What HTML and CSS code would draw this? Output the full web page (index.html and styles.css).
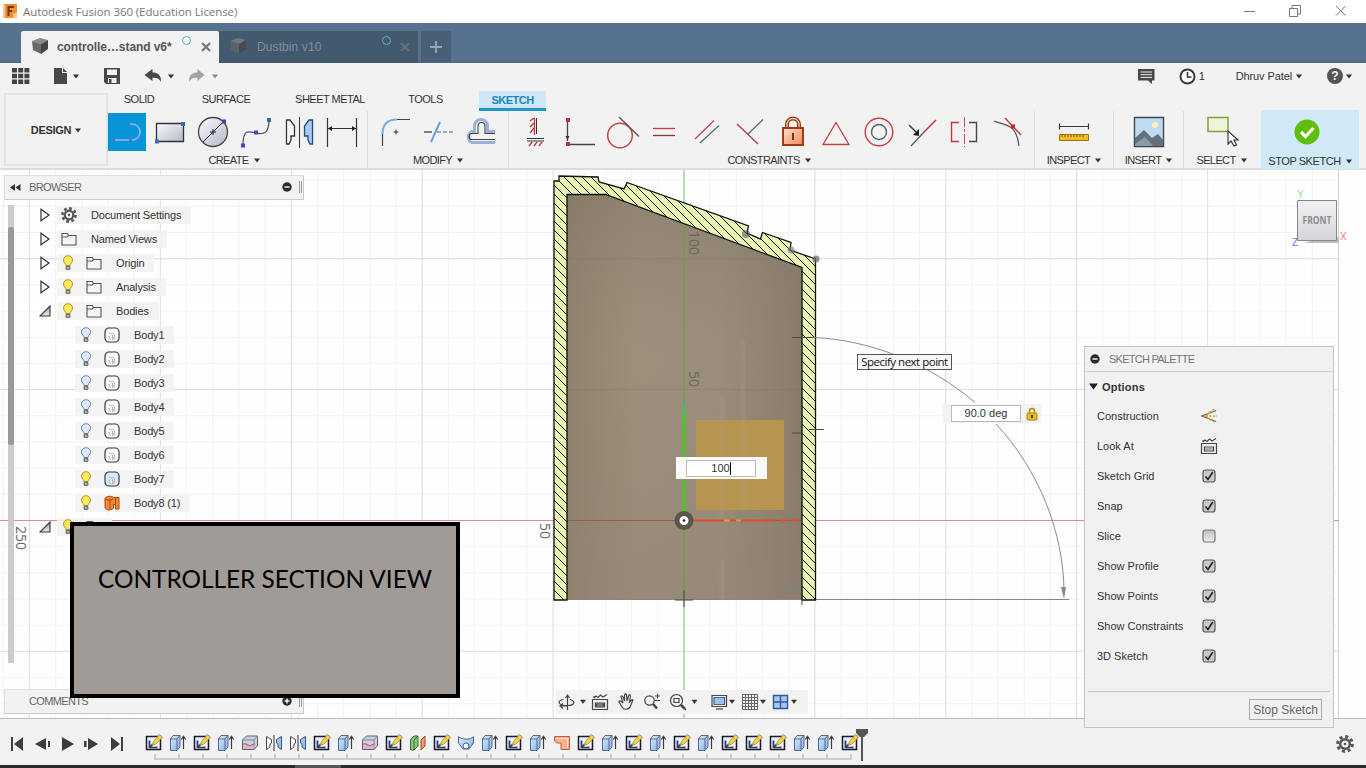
FILE: index.html
```html
<!DOCTYPE html>
<html lang="en">
<head>
<meta charset="utf-8">
<title>Autodesk Fusion 360 (Education License)</title>
<link rel="stylesheet" href="styles.css">
</head>
<body>
<svg class="defs" width="0" height="0">
  <defs>
    <linearGradient id="steel" x1="0" y1="0" x2="1" y2="1"><stop offset="0" stop-color="#fafbfd"/><stop offset="1" stop-color="#b4b9cb"/></linearGradient>
    <linearGradient id="blue" x1="0" y1="0" x2="1" y2="1"><stop offset="0" stop-color="#e4f2ff"/><stop offset="1" stop-color="#7ba9dc"/></linearGradient>
    <linearGradient id="lockfill" x1="0" y1="0" x2="1" y2="1"><stop offset="0" stop-color="#fbe3d3"/><stop offset="1" stop-color="#f08a58"/></linearGradient>
    <linearGradient id="grayfill" x1="0" y1="0" x2="0" y2="1"><stop offset="0" stop-color="#9a9a9a"/><stop offset="1" stop-color="#eee"/></linearGradient>
  </defs>
  <symbol id="caret" viewBox="0 0 6 5"><path d="M0 .5h6L3 4.500z"/></symbol>
  <symbol id="cube" viewBox="0 0 18 18"><path d="M1 4L9 1l8 2-7 4z" fill="#8a8a8a"/><path d="M1 4l9 3v10l-8-4z" fill="#696969"/><path d="M10 7l7-4v9l-7 5z" fill="#444"/></symbol>
  <symbol id="gear" viewBox="0 0 16 16"><circle cx="8" cy="8" r="6.600" fill="none" stroke="#555" stroke-width="2.600" stroke-dasharray="2.700 2.480"/><circle cx="8" cy="8" r="4.300" fill="none" stroke="#555" stroke-width="2.200"/><circle cx="8" cy="8" r="1.200" fill="#555"/></symbol>
  <symbol id="closed" viewBox="0 0 10 14"><path d="M1 1.200v11.600L9 7z" fill="#fff" stroke="#333" stroke-width="1.200"/></symbol>
  <symbol id="open" viewBox="0 0 12 12"><path d="M11 1v10H1z" fill="url(#grayfill)" stroke="#333" stroke-width="1.100"/></symbol>
  <symbol id="folder" viewBox="0 0 16 14"><path d="M1 13V1.500h5.500l1 2H15V13zM1 5h5l1.500-1.500" fill="#f6f6f6" stroke="#555" stroke-width="1.100"/></symbol>
  <symbol id="bulb" viewBox="0 0 12 16"><path d="M4 10.500C3.800 8.500 1.500 8 1.500 5a4.500 4.300 0 0 1 9 0c0 3-2.300 3.500-2.500 5.500z" stroke-width="1"/><path d="M4.200 11.300h3.600v3H4.200z" fill="#bbb" stroke="#555"/></symbol>
  <symbol id="solid" viewBox="0 0 16 16"><rect x="1" y="1" width="14" height="14" rx="4" stroke="#3a3a3a" stroke-width="1.200"/><path d="M5 6l3 1 2-1M5 8.500v3l2 1M8.500 8v4.500l2-1V7" fill="none" stroke="#aeb2b8"/></symbol>
  <symbol id="surf" viewBox="0 0 16 16"><path d="M1 3.500C2 .8 8 .8 9.500 2.500H15V14h-3.500V9.500H9.500V13C8 15.500 2 15.500 1 13z" fill="#f58638" stroke="#a8460c"/><path d="M1.500 4c2 1.500 5 1.500 7.500 0M11.500 3v6.500M6 5v9.500" fill="none" stroke="#a8460c"/></symbol>
  <symbol id="minus" viewBox="0 0 10 10"><circle cx="5" cy="5" r="4.700" fill="#2b2b2b"/><path d="M2.500 5h5" stroke="#fff" stroke-width="1.400"/></symbol>
  <symbol id="check" viewBox="0 0 14 14"><rect x="1" y="1" width="12" height="12" rx="2.500" fill="#c9c9c9" stroke="#555" stroke-width="1.200"/><path d="M3.500 7.500l2.500 3 4.800-7.500" fill="none" stroke="#222" stroke-width="1.600"/></symbol>
  <symbol id="uncheck" viewBox="0 0 14 14"><rect x="1" y="1" width="12" height="12" rx="2.500" fill="url(#grayfill)" fill-opacity=".6" stroke="#777" stroke-width="1.200"/></symbol>
  <symbol id="lookat" viewBox="0 0 18 18"><path d="M1.500 6.500h15v10h-15zM4.500 10h9v4h-9z" fill="#eee" stroke="#444" stroke-width="1.200"/><path d="M5.500 11h7v2h-7z" fill="#aaa"/><path d="M3 5l2-2 2 1.500L9.500 2l2.500 2 4-2.500M3 5V3" fill="none" stroke="#444" stroke-width="1.100"/></symbol>
  <symbol id="t-sketch" viewBox="0 0 18 18"><path d="M1.500 2.500h14v13h-14z" fill="#e9eef8" stroke="#1b1b2b" stroke-width="1.500"/><path d="M4.500 6.500v7h8M5 13l3-3" fill="none" stroke="#263a5e" stroke-width="1.700"/><path d="M7.500 11l1-3.500L14.500 .5l3 2.500-6.500 7z" fill="#f0cf42" stroke="#a98c39" stroke-width=".8"/></symbol>
  <symbol id="t-extrude" viewBox="0 0 18 18"><path d="M1.500 5L4 1.500h7V13l-3 3.500H1.500z" fill="url(#blue)" stroke="#516c93"/><path d="M1.500 5H8l3-3.500M8 5v11" fill="none" stroke="#516c93"/><path d="M14.500 15V3m-2.200 2.500l2.200-3.200 2.200 3.200" fill="none" stroke="#3a3a3a" stroke-width="1.200"/></symbol>
  <symbol id="t-split" viewBox="0 0 18 18"><path d="M1.500 6l4-4h11v9.500l-3.500 4H1.500z" fill="#cbd0dc" stroke="#5d6577"/><path d="M1.500 6H13l3.500-4M13 6v9" fill="none" stroke="#828a9c"/><path d="M2 10.500c3-4 6 4 11 0l3-2.500v3.500l-3.500 3.500H2z" fill="#dca9c0" fill-opacity=".6"/><path d="M1.500 11c3-4 6 3 9 0l2.500-1" fill="none" stroke="#b3466f"/></symbol>
  <symbol id="t-mirror" viewBox="0 0 18 18"><path d="M1.500 2.500l5 3V9L5 10v3l-3.500 2.500z" fill="#fff" stroke="#444"/><path d="M16.500 2.500l-5 3V9l1.500 1v3l3.500 2.500z" fill="#9bc3ee" stroke="#35577f"/><path d="M9 1v16" stroke="#333"/></symbol>
  <symbol id="t-offset" viewBox="0 0 18 18"><path d="M1.500 6L5 2h4v10l-4 4H1.500z" fill="#8cc07f" stroke="#35752d"/><path d="M5 6L9 2M5 6v10" fill="none" stroke="#35752d"/><path d="M12 6l4-4v10l-4 4z" fill="#ec9965" stroke="#a84c20"/></symbol>
  <symbol id="t-loft" viewBox="0 0 18 18"><path d="M1.500 2.500C4 6 14 6 16.500 2.500V9L12 15H6L1.500 9z" fill="url(#blue)" stroke="#4b6791"/><circle cx="9" cy="12" r="3" fill="#f4f7fb" stroke="#4b6791"/></symbol>
  <symbol id="t-comb" viewBox="0 0 18 18"><path d="M1.500 2.500h15v13H8V9H4L1.500 7z" fill="#f5b394" stroke="#c05c37"/><path d="M4 4.500h10.500v9" fill="none" stroke="#fadccd"/></symbol>
  <symbol id="lock" viewBox="0 0 12 14"><path d="M3.500 6V4a2.500 2.500 0 0 1 5 0v2" fill="none" stroke="#b38810" stroke-width="1.600"/><rect x="1" y="6" width="10" height="7" rx="1" fill="#edbc23" stroke="#af8209"/><path d="M6 8v3" stroke="#4b3300" stroke-width="2"/></symbol>
</svg>

<div class="app">
  <header class="titlebar">
    <svg class="app-logo" width="14" height="14" viewBox="0 0 14 14"><path d="M0 0h14v14H0z" fill="#f9c796"/><path d="M2 0h12v8l-4 2v4H2z" fill="#f58b2c"/><path d="M5 3h6M5 7h4M5.500 2v10" fill="none" stroke="#70380f" stroke-width="2"/></svg>
    <span class="title-text">Autodesk Fusion 360 (Education License)</span>
    <svg class="win-controls" width="106" height="14" viewBox="0 0 106 14" fill="none" stroke="#777"><path d="M1 7.500h11M46.500 4.500h8v8h-8zM49 4V1.500h8.500v8.500H55M93 2l9.500 9.500M102.500 2L93 11.500"/></svg>
  </header>

  <nav class="doc-tabs">
    <div class="doc-tab active"><svg width="18" height="18"><use href="#cube"/></svg><span class="doc-name">controlle…stand v6*</span><i class="sync"></i><svg class="x" width="10" height="10" viewBox="0 0 10 10"><path d="M1 1l8 8M9 1L1 9" stroke="#777" stroke-width="2.200"/></svg></div>
    <div class="doc-tab"><svg width="18" height="18" opacity=".65"><use href="#cube"/></svg><span class="doc-name">Dustbin v10</span><i class="sync"></i><svg class="x" width="10" height="10" viewBox="0 0 10 10"><path d="M1 1l8 8M9 1L1 9" stroke="#60707f" stroke-width="2"/></svg></div>
    <div class="new-tab"><svg width="12" height="12" viewBox="0 0 12 12"><path d="M6 0v12M0 6h12" stroke="#9ba8b4" stroke-width="1.800"/></svg></div>
  </nav>

  <div class="quickbar">
    <svg width="212" height="20" viewBox="0 0 212 20">
      <path d="M2 2h5v4.500H2zM8.200 2h5v4.500h-5zM14.400 2h5v4.500h-5zM2 7.800h5v4.500H2zM8.200 7.800h5v4.500h-5zM14.400 7.800h5v4.500h-5zM2 13.600h5V18H2zM8.200 13.600h5V18h-5zM14.400 13.600h5V18h-5z" fill="#444"/>
      <path d="M44 2h8v5h5v11H44zM53 2l4 4h-4z" fill="#484848"/><path d="M63 8.500h6l-3 4z" fill="#333"/>
      <path d="M94 2h16v16H96l-2-2z" fill="#484848"/><path d="M97 3.500h10V9h-10zM98 12h8.500v5H98z" fill="#f2f2f2"/><path d="M99 13h2.500v4H99z" fill="#484848"/>
      <path d="M134.500 9l8-6v3.600c5 0 9 2.500 8.500 9.400-1.500-3.500-4-4.300-8.500-4.300V15z" fill="#484848"/><path d="M158 8.500h6l-3 4z" fill="#333"/>
      <path d="M194.500 9l-7-6v3.600c-5 0-9 2.500-8.500 9.400 1.500-3.500 4-4.300 8.500-4.300V15z" fill="#a3a3a3"/><path d="M202 8.500h6l-3 4z" fill="#888"/>
    </svg>
    <div class="account">
      <svg width="17" height="16" viewBox="0 0 17 16"><path d="M0 1h16.500v11.500H14V16l-4-3.500H0z" fill="#484848"/><path d="M2.500 4h11.500M2.500 6.700h11.500M2.500 9.400h11.500" stroke="#eee" stroke-width="1"/></svg>
      <svg class="clock" width="17" height="17" viewBox="0 0 17 17"><circle cx="8.500" cy="8.500" r="7" fill="#fff" stroke="#3c3c3c" stroke-width="2"/><path d="M8.500 4v5h4" fill="none" stroke="#333" stroke-width="1.500"/></svg>
      <span class="count">1</span>
      <span class="user">Dhruv Patel</span><svg class="car" width="6" height="5"><use href="#caret"/></svg>
      <span class="help">?</span><svg class="car" width="6" height="5"><use href="#caret"/></svg>
    </div>
  </div>

  <div class="ribbon">
    <button class="workspace">DESIGN<svg class="car" width="6" height="5"><use href="#caret"/></svg></button>
    <div class="ribbon-main">
      <div class="ribbon-tabs"><span class="rt solid">SOLID</span><span class="rt surface">SURFACE</span><span class="rt sheet">SHEET METAL</span><span class="rt tools">TOOLS</span><span class="rt sketch">SKETCH</span></div>
      <div class="groups">
        <section class="group create"><div class="icons">
          <svg viewBox="0 0 38 38"><path d="M0 0h38v38H0z" fill="#0696d7"/><path d="M5 27h19a8 8 0 0 0 0-16h-4" fill="none" stroke="#9bb7f0" stroke-width="1.500"/><path d="M4 25.500h3v3H4zM21 25.500h3v3h-3zM19 9.500h3v3h-3z" fill="#4773c9"/></svg>
          <svg viewBox="0 0 38 38"><path d="M5.500 10.500h27v18h-27z" fill="url(#steel)" stroke="#333" stroke-width="1.300"/><path d="M30 9h4v4h-4zM4 26.500h4v4H4z" fill="#366fb0"/></svg>
          <svg viewBox="0 0 38 38"><circle cx="19" cy="19" r="14.500" fill="url(#steel)" stroke="#444" stroke-width="1.300"/><path d="M9 29L29.500 8.500M19 16v6M16 19h6" stroke="#222"/><path d="M28 6.500h4v4h-4z" fill="#4740ad"/></svg>
          <svg viewBox="0 0 38 38"><path d="M6 32C6 16 11 18 19 20s13 0 13-13" fill="none" stroke="#49557a" stroke-width="1.300"/><path d="M4 30.500h4v4H4zM17 17.500h4v4h-4z" fill="#4b42bd"/><path d="M30 5h4v4h-4z" fill="#2a6f94"/></svg>
          <svg viewBox="0 0 38 38"><path d="M6.500 7h3.500l4.500 6v10h-3.500v4L9 31H6.500z" fill="#fbfbfb" stroke="#333" stroke-width="1.300"/><path d="M32.500 7H29l-4.500 6v10H28v4l2 4h2.500z" fill="#a9cbf2" stroke="#244d7f" stroke-width="1.300"/><path d="M19.500 4v31" stroke="#333"/></svg>
          <svg viewBox="0 0 38 38"><path d="M4.500 5v29M33.500 5v29M5 15.500h28" stroke="#333" stroke-width="1.200"/><path d="M5 15.500l4-2.500v5zM33 15.500l-4-2.500v5z" fill="#222"/></svg>
        </div><div class="label">CREATE<svg class="car" width="6" height="5"><use href="#caret"/></svg></div></section>
        <section class="group modify"><div class="icons">
          <svg viewBox="0 0 38 38"><path d="M19 6.500h15M6.500 19v14" stroke="#444" stroke-width="1.200"/><path d="M6.500 21C6.500 11 12 6.500 21 6.500" fill="none" stroke="#7eabe1" stroke-width="2"/><path d="M20 16.500v5M17.500 19h5" stroke="#333"/></svg>
          <svg viewBox="0 0 38 38"><path d="M5 19h8" stroke="#333" stroke-width="1.200"/><path d="M18 19h16" stroke="#8294bd" stroke-width="1.300" stroke-dasharray="4 2"/><path d="M12 29l9-20" stroke="#6a9de0" stroke-width="2"/></svg>
          <svg viewBox="0 0 38 38"><path d="M33 18.500h-7.500V13a6.500 6.500 0 0 0-13 0v5.500H10a6 6 0 0 0 0 11h23" fill="none" stroke="#9db0da" stroke-width="3"/><path d="M33 20.500h-10V13a3.500 3.500 0 0 0-7 0v7.500h-6c-4 0-4 6 0 6h23" fill="none" stroke="#444" stroke-width="1.100"/></svg>
        </div><div class="label">MODIFY<svg class="car" width="6" height="5"><use href="#caret"/></svg></div></section>
        <section class="group constraints"><div class="icons">
          <svg viewBox="0 0 38 38"><path d="M19.500 5v16M10 25.500h17M10 28h17" stroke="#343434"/><path d="M17.500 5v17M17 5l-4 3M17 10l-4 4M17 15l-4 5M15 29l-3 4M20 29l-3 4M25 29l-3 4" fill="none" stroke="#bd3838" stroke-width="1.300"/></svg>
          <svg viewBox="0 0 38 38"><path d="M7.500 8v20M9 31.500h26" stroke="#444" stroke-width="1.300"/><path d="M6 5h4v4H6zM6 29h4v4H6z" fill="#bd2f40"/><path d="M5.500 23l2 4 2-4" fill="#333"/></svg>
          <svg viewBox="0 0 38 38"><circle cx="17" cy="22.500" r="12.300" fill="none" stroke="#c6444b" stroke-width="1.500"/><path d="M16 4l20 19.500" stroke="#555" stroke-width="1.300"/></svg>
          <svg viewBox="0 0 38 38"><path d="M8 15.500h22" stroke="#c83940" stroke-width="1.300"/><path d="M8 22.500h22" stroke="#7b3642" stroke-width="1.300"/></svg>
          <svg viewBox="0 0 38 38"><path d="M7 26L26 7.500" stroke="#c94149" stroke-width="1.300"/><path d="M12 30L31 12.500" stroke="#576e70" stroke-width="1.300"/></svg>
          <svg viewBox="0 0 38 38"><path d="M6 11l21 20" stroke="#b93740" stroke-width="1.300"/><path d="M17 21L32 6.500" stroke="#59706b" stroke-width="1.300"/></svg>
          <svg viewBox="0 0 38 38"><path d="M13 16v-5a6 5.500 0 0 1 12 0v5" fill="none" stroke="#9e3613" stroke-width="4"/><path d="M13 16v-5a6 5.500 0 0 1 12 0v5" fill="none" stroke="#f5d4bf" stroke-width="1.300"/><rect x="9" y="15" width="20" height="17" fill="url(#lockfill)" stroke="#a33a11" stroke-width="2"/><path d="M19 20v7" stroke="#8d300d" stroke-width="2"/></svg>
          <svg viewBox="0 0 38 38"><path d="M19 9.500l13 22H6z" fill="none" stroke="#c13e46" stroke-width="1.300"/></svg>
          <svg viewBox="0 0 38 38"><circle cx="19" cy="19" r="13.800" fill="none" stroke="#c93e49" stroke-width="1.400"/><circle cx="19" cy="19" r="7.500" fill="none" stroke="#4d6869" stroke-width="1.400"/></svg>
          <svg viewBox="0 0 38 38"><path d="M9 33l14-15" stroke="#555" stroke-width="1.300"/><path d="M23 18L34 7" stroke="#c4303b" stroke-width="1.500"/><path d="M7 12l8 8" stroke="#333" stroke-width="1.500"/><path d="M17 23v-7l-6 6z" fill="#222"/></svg>
          <svg viewBox="0 0 38 38"><path d="M14 9.500H6.500v19H14" fill="none" stroke="#c33641" stroke-width="1.400"/><path d="M24 9.500h7.500v19H24" fill="none" stroke="#4c4446" stroke-width="1.400"/><path d="M19.500 4v30" stroke="#c24c50" stroke-dasharray="10 2 3 2"/></svg>
          <svg viewBox="0 0 38 38"><path d="M6 8c12 5 22 2 25 25" fill="none" stroke="#555" stroke-width="1.200"/><path d="M17 5l16 17" stroke="#c33c45" stroke-width="1.500"/><path d="M23 11.500h4v4h-4z" fill="#c92535"/></svg>
        </div><div class="label">CONSTRAINTS<svg class="car" width="6" height="5"><use href="#caret"/></svg></div></section>
        <section class="group inspect"><div class="icons"><svg viewBox="0 0 38 38"><path d="M4.500 10.500v6M33.500 10.500v6M5 13.500h28" stroke="#383838" stroke-width="1.200"/><path d="M4.500 21.500h29v6h-29z" fill="#f0bd2c" stroke="#a87008"/><path d="M7 22v2m3-2v2m3-2v2m3-2v2m3-2v2m3-2v2m3-2v2m3-2v2" stroke="#85590a"/></svg></div><div class="label">INSPECT<svg class="car" width="6" height="5"><use href="#caret"/></svg></div></section>
        <section class="group insert"><div class="icons"><svg viewBox="0 0 38 38"><path d="M4.500 4.500h29v29h-29z" fill="#bddcf2" stroke="#3c4650" stroke-width="1.400"/><circle cx="25" cy="12" r="3" fill="#fff1b0"/><path d="M5 25l9-8 8 8 6-4 5 6v6H5z" fill="#64717d"/><path d="M5 31l10-7 8 9H5z" fill="#8b9aa4"/></svg></div><div class="label">INSERT<svg class="car" width="6" height="5"><use href="#caret"/></svg></div></section>
        <section class="group select"><div class="icons"><svg viewBox="0 0 38 38"><path d="M4 4.500h20v14H4z" fill="#eef4d8" stroke="#82a13d" stroke-width="1.500"/><path d="M24 18v13l3-3 3 5 2.500-1-2.500-5h4z" fill="#fff" stroke="#30394b" stroke-width="1.200"/></svg></div><div class="label">SELECT<svg class="car" width="6" height="5"><use href="#caret"/></svg></div></section>
        <section class="group stop"><div class="icons"><svg viewBox="0 0 38 38"><circle cx="16" cy="19" r="12.500" fill="#5fbe0c"/><path d="M10 19l4.500 4.500L22.500 15" fill="none" stroke="#fff" stroke-width="3.200"/></svg></div><div class="label">STOP SKETCH<svg class="car" width="6" height="5"><use href="#caret"/></svg></div></section>
      </div>
    </div>
  </div>

  <main class="canvas">
    <svg class="drawing" width="1366" height="548" viewBox="0 170 1366 548">
      <defs>
        <pattern id="minor" width="26.180" height="26.180" patternUnits="userSpaceOnUse" x="29" y="520"><path d="M.5 0v26.200M0 .5h26.200" stroke="#f2f2f2"/></pattern>
        <pattern id="major" width="130.900" height="130.900" patternUnits="userSpaceOnUse" x="29" y="520"><path d="M.5 0v131M0 .5h131" stroke="#e0e0e0"/></pattern>
        <pattern id="hatch" width="9" height="9" patternUnits="userSpaceOnUse"><path d="M-1-1l11 11M-1 8l2 2M8-1l2 2" stroke="#14170a" stroke-width="1"/></pattern>
        <linearGradient id="wood"><stop offset="0" stop-color="#8f826f"/><stop offset=".3" stop-color="#9c8f7c"/><stop offset=".65" stop-color="#9a8d7b"/><stop offset="1" stop-color="#8a7c6c"/></linearGradient>
        <linearGradient id="shade" x1="0" y1="0" x2="0" y2="1"><stop offset="0" stop-color="#7d705e" stop-opacity=".4"/><stop offset=".4" stop-color="#8c7f6d" stop-opacity="0"/><stop offset="1" stop-color="#8c7f6d" stop-opacity=".3"/></linearGradient>
        <linearGradient id="cubeface" x1="0" y1="0" x2="0" y2="1"><stop offset="0" stop-color="#f2f2f3"/><stop offset="1" stop-color="#d5d5d9"/></linearGradient>
      </defs>
      <path d="M0 170h1366v548H0z" fill="#fefefe"/>
      <path d="M0 170h1339v548H0z" fill="url(#minor)"/><path d="M0 170h1339v548H0z" fill="url(#major)"/>
      <path d="M1338.500 170v548" stroke="#d2d2d2"/>
      <path d="M0 520.500h1339" stroke="#d08f9a"/><path d="M684 170v548" stroke="#9cdb9c" stroke-width="1.400"/>
      <path d="M567 600V195h39l196 72v333z" fill="url(#wood)"/><path d="M567 600V195h39l196 72v333z" fill="url(#shade)"/>
      <path d="M567 389.500h235M567 258.700h213" stroke="#7e725f" stroke-opacity=".3"/>
      <path d="M684 224v376" stroke="#729a54" stroke-width="1.500"/>
      <path d="M567 520.500h235" stroke="#a4554f"/><path d="M567 599.500h235M816 599.500h253" stroke="#8a8580"/>
      <path d="M696 420h88v90h-88z" fill="#b7944f"/>
      <path d="M722 395v125M743 340v170M722 560v40" stroke="#b3a48c" stroke-opacity=".2" stroke-width="5"/>
      <path d="M554 600V181H559V176L598 177L599 182L624 189L627 182.500L748.500 226L747 233L760.500 239L762.500 232.500L791 242.500L790 250L815.500 259V600H802V267.500L605.500 194.500H567V600z" fill="#e9f4b2"/>
      <path d="M554 600V181H559V176L598 177L599 182L624 189L627 182.500L748.500 226L747 233L760.500 239L762.500 232.500L791 242.500L790 250L815.500 259V600H802V267.500L605.500 194.500H567V600z" fill="url(#hatch)" stroke="#111" stroke-width="1.300"/>
      <path d="M684 408v112" stroke="#59bd36" stroke-width="3.500"/><path d="M684 403v15" stroke="#45b96e" stroke-width="2"/>
      <path d="M692 520.500h33m5 0h5m5 0h35m4 0h8m4 0h7" stroke="#e74b26" stroke-width="2"/><path d="M724 520.500h6m6 0h5" stroke="#e8963b" stroke-width="2"/>
      <circle cx="684" cy="520.500" r="7" fill="#fff" stroke="#5c5849" stroke-width="5"/><circle cx="684" cy="520.500" r="1.300" fill="#222"/>
      <path d="M684 590v17M675 600h18M802 590v15M792 337.500h21M792 433h10M809 429.500h15" stroke="#4d4a42" fill="none"/>
      <circle cx="746" cy="234" r="4" fill="#555" fill-opacity=".6"/><circle cx="816" cy="259" r="3.500" fill="#666" fill-opacity=".7"/><circle cx="791" cy="250" r="3.500" fill="#777" fill-opacity=".6"/>
      <path d="M785 588l14-3v8" fill="none" stroke="#5c8d9c" stroke-opacity=".7"/>
      <path d="M813 337.500c54 2 114 24 162 65M996 424c43 46 68 109 68 169" fill="none" stroke="#8c8c8c"/><path d="M1061 587h5l-2 12z" fill="#888"/>
      <g class="rulers"><text transform="translate(688.500 231) rotate(90)" textLength="24" lengthAdjust="spacingAndGlyphs">100</text><text transform="translate(688.500 371) rotate(90)">50</text><text transform="translate(539.500 523) rotate(90)">50</text><text transform="translate(16 526) rotate(90)">250</text></g>
      <path d="M1303 243h36v-4l-3-4z" fill="#bbb"/>
      <path d="M1297.500 200.500h39v40h-39z" fill="url(#cubeface)" stroke="#87878b"/>
      <text class="cube-text" x="1317" y="224" text-anchor="middle" textLength="29" lengthAdjust="spacingAndGlyphs">FRONT</text>
      <g class="axes"><text x="1297" y="198" fill="#8ee38e">Y</text><text x="1292" y="246" fill="#7373ea">Z</text><text x="1340" y="240" fill="#f07a8e">X</text></g>
    </svg>

    <div class="scroll"><i></i></div>
    <aside class="browser">
      <header class="panel-head"><svg width="11" height="7" viewBox="0 0 11 7"><path d="M5 0v7L0 3.500zM10.500 0v7l-5-3.500z" fill="#333"/></svg><span>BROWSER</span><svg class="end" width="10" height="10"><use href="#minus"/></svg><i class="grip"></i></header>
      <ul class="tree">
        <li><svg class="arrow" width="10" height="14"><use href="#closed"/></svg><div class="node top"><svg width="16" height="16"><use href="#gear"/></svg><span>Document Settings</span></div></li>
        <li><svg class="arrow" width="10" height="14"><use href="#closed"/></svg><div class="node top"><svg width="16" height="14"><use href="#folder"/></svg><span>Named Views</span></div></li>
        <li><svg class="arrow" width="10" height="14"><use href="#closed"/></svg><div class="node"><svg class="bulb on" width="12" height="16"><use href="#bulb"/></svg><svg width="16" height="14"><use href="#folder"/></svg><span>Origin</span></div></li>
        <li><svg class="arrow" width="10" height="14"><use href="#closed"/></svg><div class="node"><svg class="bulb on" width="12" height="16"><use href="#bulb"/></svg><svg width="16" height="14"><use href="#folder"/></svg><span>Analysis</span></div></li>
        <li><svg class="arrow" width="12" height="12"><use href="#open"/></svg><div class="node"><svg class="bulb on" width="12" height="16"><use href="#bulb"/></svg><svg width="16" height="14"><use href="#folder"/></svg><span>Bodies</span></div></li>
        <li class="body"><div class="node"><svg class="bulb off" width="12" height="16"><use href="#bulb"/></svg><svg class="solid-icon" width="16" height="16"><use href="#solid"/></svg><span>Body1</span></div></li>
        <li class="body"><div class="node"><svg class="bulb off" width="12" height="16"><use href="#bulb"/></svg><svg class="solid-icon" width="16" height="16"><use href="#solid"/></svg><span>Body2</span></div></li>
        <li class="body"><div class="node"><svg class="bulb off" width="12" height="16"><use href="#bulb"/></svg><svg class="solid-icon" width="16" height="16"><use href="#solid"/></svg><span>Body3</span></div></li>
        <li class="body"><div class="node"><svg class="bulb off" width="12" height="16"><use href="#bulb"/></svg><svg class="solid-icon" width="16" height="16"><use href="#solid"/></svg><span>Body4</span></div></li>
        <li class="body"><div class="node"><svg class="bulb off" width="12" height="16"><use href="#bulb"/></svg><svg class="solid-icon" width="16" height="16"><use href="#solid"/></svg><span>Body5</span></div></li>
        <li class="body"><div class="node"><svg class="bulb off" width="12" height="16"><use href="#bulb"/></svg><svg class="solid-icon" width="16" height="16"><use href="#solid"/></svg><span>Body6</span></div></li>
        <li class="body"><div class="node"><svg class="bulb on" width="12" height="16"><use href="#bulb"/></svg><svg class="solid-icon shown" width="16" height="16"><use href="#solid"/></svg><span>Body7</span></div></li>
        <li class="body"><div class="node"><svg class="bulb on" width="12" height="16"><use href="#bulb"/></svg><svg width="16" height="16"><use href="#surf"/></svg><span>Body8 (1)</span></div></li>
        <li><svg class="arrow" width="12" height="12"><use href="#open"/></svg><div class="node"><svg class="bulb on" width="12" height="16"><use href="#bulb"/></svg><svg width="16" height="14"><use href="#folder"/></svg></div></li>
      </ul>
    </aside>
    <div class="panel-head comments"><span>COMMENTS</span><svg class="end" width="10" height="10" viewBox="0 0 10 10"><use href="#minus"/><path d="M5 2.500v5" stroke="#fff" stroke-width="1.400"/></svg><i class="grip"></i></div>
    <div class="callout">CONTROLLER SECTION VIEW</div>

    <div class="tooltip">Specify next point</div>
    <div class="dim angle"><span>90.0 deg</span><svg width="12" height="14"><use href="#lock"/></svg></div>
    <div class="dim length"><span>100<i class="cursor"></i></span></div>

    <div class="navbar">
      <svg width="252" height="24" viewBox="556 690 252 24" fill="none" stroke="#444" stroke-width="1.200">
        <path d="M567.500 695v15m-2-12l2-3 2 3M570 699.500c6 1.500 5 6-2.500 6-10 0-11-5-4-6M561 706h7m-5-2.500l-3 2.500 3 2.500"/>
        <path d="M692 700h5l-2.500 3.500zM580.500 700h5l-2.500 3.500zM729.500 700h5l-2.500 3.500zM760.500 700h5l-2.500 3.500zM791.500 700h5l-2.500 3.500z" fill="#333" stroke="#333" stroke-width=".5"/>
        <use href="#lookat" x="591" y="693" width="18" height="18"/>
        <path d="M622 707l-3-5c0-2 2-1 4 1l-2-6c0-2 2-1 2.500 1l1 3v-6c0-1.500 2-1.500 2 0l.5 6 1.500-5c.5-2 2-1 2 0l-1 6 2-2c1-1 2 0 1 1l-2 5c-1 3-6 5-8.500 1z"/>
        <circle cx="649.500" cy="700.500" r="4.700"/><path d="M653 704l4 4.500" stroke-width="2.500"/><path d="M657.500 693.500v5M655 696h5M655 700.500h5" stroke-width="1"/>
        <circle cx="676.500" cy="700.500" r="6"/><path d="M674 698.500h5v4h-5zM681 705l5 5"/><path d="M681 705l4 4" stroke-width="2.500"/>
        <path d="M712 695.500h14.500v11H712z"/><path d="M714 697.500h10.500v7H714z" fill="#9ec3ee" stroke="#426798"/><path d="M716 709h7"/>
        <path d="M742.500 694.500h15v15h-15zM745.500 694.500v15m3-15v15m3-15v15m3-15v15m-12-12h15m-15 3h15m-15 3h15m-15 3h15" stroke="#666" stroke-width="1"/>
        <path d="M773.500 695.500h14v13h-14zM780.500 695.500v13M773.500 702h14" fill="#a8c9ed" stroke="#345899" stroke-width="1.400"/>
      </svg>
    </div>

    <aside class="palette">
      <header><svg width="10" height="10"><use href="#minus"/></svg><span>SKETCH PALETTE</span></header>
      <h2><svg width="9" height="7" viewBox="0 0 9 7"><path d="M0 .5h9l-4.500 6z" fill="#222"/></svg>Options</h2>
      <dl>
        <div><dt>Construction</dt><dd><svg width="18" height="16" viewBox="0 0 18 16"><path d="M16 2.500L2 8l14 5.500" fill="none" stroke="#666" stroke-width="1.300"/><path d="M14 1L5 8l9 6M6 8h11" fill="none" stroke="#e69229" stroke-width="1.300" stroke-dasharray="2 1.500"/></svg></dd></div>
        <div><dt>Look At</dt><dd><svg width="18" height="18"><use href="#lookat"/></svg></dd></div>
        <div><dt>Sketch Grid</dt><dd><svg width="14" height="14"><use href="#check"/></svg></dd></div>
        <div><dt>Snap</dt><dd><svg width="14" height="14"><use href="#check"/></svg></dd></div>
        <div><dt>Slice</dt><dd><svg width="14" height="14"><use href="#uncheck"/></svg></dd></div>
        <div><dt>Show Profile</dt><dd><svg width="14" height="14"><use href="#check"/></svg></dd></div>
        <div><dt>Show Points</dt><dd><svg width="14" height="14"><use href="#check"/></svg></dd></div>
        <div><dt>Show Constraints</dt><dd><svg width="14" height="14"><use href="#check"/></svg></dd></div>
        <div><dt>3D Sketch</dt><dd><svg width="14" height="14"><use href="#check"/></svg></dd></div>
      </dl>
      <footer><button>Stop Sketch</button></footer>
    </aside>
  </main>

  <footer class="timeline">
    <svg class="play" width="110" height="16" viewBox="0 0 110 16"><path d="M0 1h2v14H0zM12 1v14L3 8zM35 2v12l-11-6zM37 5h2v6h-2zM51 1l12 7-12 7zM77 2v12l10-6zM73 5h2.500v6H73zM100 1v14l9-7zM110 1h2v14h-2z" fill="#3d3d3d"/></svg>
    <div class="track">
      <svg><use href="#t-sketch"/></svg><svg><use href="#t-extrude"/></svg><svg><use href="#t-sketch"/></svg><svg><use href="#t-extrude"/></svg><svg><use href="#t-split"/></svg><svg><use href="#t-mirror"/></svg><svg><use href="#t-mirror"/></svg><svg><use href="#t-sketch"/></svg><svg><use href="#t-extrude"/></svg><svg><use href="#t-split"/></svg><svg><use href="#t-sketch"/></svg><svg><use href="#t-offset"/></svg><svg><use href="#t-sketch"/></svg><svg><use href="#t-loft"/></svg><svg><use href="#t-extrude"/></svg><svg><use href="#t-sketch"/></svg><svg><use href="#t-extrude"/></svg><svg><use href="#t-comb"/></svg><svg><use href="#t-sketch"/></svg><svg><use href="#t-extrude"/></svg><svg><use href="#t-sketch"/></svg><svg><use href="#t-extrude"/></svg><svg><use href="#t-sketch"/></svg><svg><use href="#t-extrude"/></svg><svg><use href="#t-sketch"/></svg><svg><use href="#t-sketch"/></svg><svg><use href="#t-sketch"/></svg><svg><use href="#t-extrude"/></svg><svg><use href="#t-extrude"/></svg><svg><use href="#t-sketch"/></svg>
      <i class="rail"></i>
      <svg class="marker" viewBox="0 0 12 32"><path d="M0 0h12v4L8 8H4L0 4zM5 7h2v25H5z" fill="#555"/></svg>
    </div>
    <svg class="settings" width="18" height="18"><use href="#gear"/></svg>
  </footer>
  <div class="taskbar"><i></i></div>
</div>
</body>
</html>
```
FILE: styles.css
```css
* { box-sizing: border-box; }
body { margin: 0; background: #fff; color: #333; font: 11px "Liberation Sans", Arial, sans-serif; overflow: hidden; }
svg { display: block; flex: none; }
button { font: inherit; color: inherit; }
.defs { position: absolute; }
.app { width: 1366px; height: 768px; display: flex; flex-direction: column; background: #f2f2f2; }
.car { display: inline-block; fill: #333; }

.titlebar { height: 23px; flex: none; background: #fff; display: flex; align-items: center; padding: 0 17px 2px 3px; }
.title-text { margin-left: 6px; font: 11.500px "Open Sans", sans-serif; letter-spacing: -.08px; color: #777; white-space: nowrap; padding-top: 2px; }
.win-controls { margin-left: auto; }

.doc-tabs { height: 40px; flex: none; background: #56728f; border-bottom: 2px solid #506a84; display: flex; align-items: flex-end; padding: 8px 0 0 21px; }
.doc-tab { width: 199px; height: 32px; margin-bottom: -2px; display: flex; align-items: center; padding: 0 8px 0 10px; background: #43596e; color: #7f8f9e; font-size: 12px; }
.doc-tab > svg:first-child { margin-top: -3px; }
.doc-tab.active { background: #f2f2f2; color: #555; font-weight: bold; width: 198px; border-radius: 2px 2px 0 0; }
.doc-name { margin-left: 8px; width: 115px; white-space: nowrap; letter-spacing: -.08px; }
.doc-tab:not(.active) .doc-name { width: 115px; margin-left: 10px; letter-spacing: .1px; }
.sync { width: 9px; height: 9px; border: 1.500px solid #5cb3ba; border-radius: 50%; margin: -14px 0 0 10px; }
.doc-tab .x { margin-left: auto; }
.new-tab { width: 30px; height: 31px; margin: 0 0 -1px 3px; background: #485f75; display: grid; place-items: center; }

.quickbar { height: 27px; flex: none; display: flex; align-items: center; justify-content: space-between; padding: 0 14px 1px 10px; }
.account { display: flex; align-items: center; }
.account .clock { margin-left: 24px; }
.count { margin-left: 3px; width: 8px; }
.user { margin: 0 4px 0 29px; letter-spacing: -.1px; white-space: nowrap; }
.help { width: 16px; height: 16px; margin: 0 3px 0 25px; border-radius: 50%; background: #555; color: #f2f2f2; font: bold 12px/16px "Liberation Sans", sans-serif; text-align: center; }

.ribbon { height: 80px; flex: none; display: flex; border-bottom: 2px solid #dcdcdc; }
.workspace { width: 104px; height: 73px; margin: 3px 0 0 4px; padding: 0; border: 2px solid #e4e4e4; background: #f2f2f2; font-weight: bold; font-size: 11px; letter-spacing: -.3px; }
.workspace .car { margin-left: 4px; vertical-align: 1px; }
.ribbon-main { flex: 1; margin-left: -2px; }
.ribbon-tabs { height: 21px; display: flex; align-items: center; }
.rt { text-align: center; white-space: nowrap; letter-spacing: -.5px; height: 16px; }
.solid { width: 66px; } .surface { width: 108px; } .sheet { width: 100px; } .tools { width: 91px; }
.sketch { width: 67px; height: 20px; margin-left: 8px; line-height: 19px; color: #1b86bd; background: #cfe8f7; border-bottom: 3px solid #2495cc; font-weight: bold; }
.groups { display: flex; height: 57px; }
.group { border-right: 1px solid #dcdcdc; display: flex; flex-direction: column; align-items: center; }
.icons { display: flex; height: 43px; }
.icons svg { width: 38px; height: 38px; margin: 2px 2.430px 0; }
.label { white-space: nowrap; letter-spacing: -.6px; line-height: 15px; }
.label .car { margin-left: 5px; vertical-align: 1px; }
.create { width: 262px; } .create .icons { margin-left: -4px; } .create .label { margin-left: -5px; }
.modify { width: 141px; }
.constraints { width: 526px; } .constraints .label { margin-left: -5px; }
.inspect { width: 79px; } .insert { width: 70px; }
.select { width: 77px; border: 0; } .select .label { margin-left: -2px; }
.stop { width: 98px; margin-top: -1px; padding-top: 1px; height: 59px; background: #cfe9f6; border: 0; letter-spacing: 0; }
.stop .label { letter-spacing: -.45px; }

.canvas { height: 548px; flex: none; position: relative; z-index: 1; }
.drawing { position: absolute; inset: 0; }
.rulers { font: 14px "Open Sans", sans-serif; fill: #6b645a; }
.cube-text { font: bold 10px "Open Sans", sans-serif; fill: #8b8b8f; }
.axes { font: 10px "Liberation Sans", sans-serif; }
.scroll { position: absolute; left: 8px; top: 35px; width: 6px; height: 458px; background: #ccc; padding-top: 22px; }
.scroll i { display: block; height: 218px; background: #999; border-radius: 2px; }
.browser { position: absolute; left: 4px; top: 5px; width: 300px; }
.panel-head { height: 25px; display: flex; align-items: center; padding: 0 1px 1px 5px; background: #f2f2f2; border: 1px solid #c9c9c9; border-top-color: #e0e0e0; border-left-color: #ddd; color: #666; letter-spacing: -.65px; }
.panel-head span { margin-left: 8px; }
.panel-head .end { margin-left: auto; }
.grip { width: 3px; height: 12px; border: solid #999; border-width: 0 1px; margin-left: 7px; }
.comments { position: absolute; left: 4px; top: 519px; width: 300px; }
.comments span { margin-left: 19px; }
.tree { list-style: none; margin: 3px 0 0; padding: 0 0 0 35px; }
.tree li { height: 24px; display: flex; align-items: center; }
.arrow { width: 12px; margin-right: 6px; }
.node { height: 18px; background: rgba(242,242,242,.92); display: flex; align-items: center; padding: 0 10px 0 5px; white-space: nowrap; letter-spacing: -.15px; }
.node.top { padding-left: 4px; }
.node svg + svg { margin-left: 12px; }
.node span { margin-left: 14px; }
.body { padding-left: 36px; }
.bulb.on { fill: #ffe95a; stroke: #b39a20; }
.bulb.off { fill: #dbeafc; stroke: #6c88b4; }
.solid-icon { fill: #fff; }
.solid-icon.shown { fill: #dcecfa; }
.callout { position: absolute; left: 70px; top: 352px; width: 390px; height: 176px; border: 4px solid #000; background: #a09b97; color: #000; font: 24.350px/34px Lato, sans-serif; text-align: center; padding-top: 36px; white-space: nowrap; }

.tooltip { position: absolute; left: 857px; top: 184px; width: 95px; height: 16px; border: 1px solid #555; background: #f7f7f7; color: #111; font: 11.500px/14px "Open Sans", sans-serif; text-align: center; letter-spacing: -.5px; white-space: nowrap; }
.dim { position: absolute; background: #f2f2f2; display: flex; align-items: center; }
.dim span { width: 70px; height: 17px; line-height: 15px; border: 1px solid #bbb; background: #fff; text-align: center; white-space: nowrap; }
.angle { left: 943px; top: 234px; width: 98px; height: 19px; padding-left: 8px; }
.angle svg { margin-left: 5px; }
.length { left: 676px; top: 287px; width: 91px; height: 22px; padding-left: 10px; background: #fafafa; }
.cursor { display: inline-block; width: 1px; height: 13px; background: #000; vertical-align: -3px; }
.navbar { position: absolute; left: 556px; top: 520px; background: #f2f2f2; }

.palette { position: absolute; left: 1084px; top: 176px; width: 250px; height: 382px; border: 1px solid #c4c4c4; background: #f1f1f1; display: flex; flex-direction: column; }
.palette header { height: 25px; flex: none; display: flex; align-items: center; gap: 9px; padding: 0 0 1px 5px; border-bottom: 1px solid #c9c9c9; color: #777; letter-spacing: -.75px; }
.palette h2 { height: 29px; margin: 0; padding-left: 4px; display: flex; align-items: center; gap: 4px; font-size: 11px; letter-spacing: .2px; }
.palette dl { margin: 0; }
.palette dl div { height: 30px; display: flex; align-items: center; padding-left: 12px; }
.palette dt { width: 98px; white-space: nowrap; }
.palette dd { margin: 0; width: 28px; display: grid; place-items: center; }
.palette footer { margin: auto 3px 0; height: 36px; border-top: 1px solid #c4c4c4; padding: 7px 8px; display: flex; justify-content: flex-end; }
.palette button { width: 73px; height: 21px; padding: 0; border: 1px solid #aaa; background: #f1f1f1; font-size: 12px; color: #666; white-space: nowrap; }

.timeline { height: 47px; flex: none; border-top: 1px solid #bbb; display: flex; align-items: flex-start; }
.play { overflow: visible; margin: 17px 0 0 11px; }
.track { position: relative; display: flex; margin: 15px 0 0 24px; }
.track > svg { width: 18px; height: 18px; margin-right: 6px; }
.rail { position: absolute; left: 9px; top: 20px; width: 698px; height: 6px; border-bottom: 2px solid #ccc; background: repeating-linear-gradient(90deg, #ccc 0 2px, transparent 2px 24px); }
.track > .marker { position: absolute; left: 711px; top: -5px; width: 12px; height: 32px; }
.settings { margin: 16px 12px 0 auto; }
.taskbar { height: 3px; flex: none; background: #292c31; }
.taskbar i { display: block; margin-left: 295px; width: 46px; height: 3px; background: #555; }
```
